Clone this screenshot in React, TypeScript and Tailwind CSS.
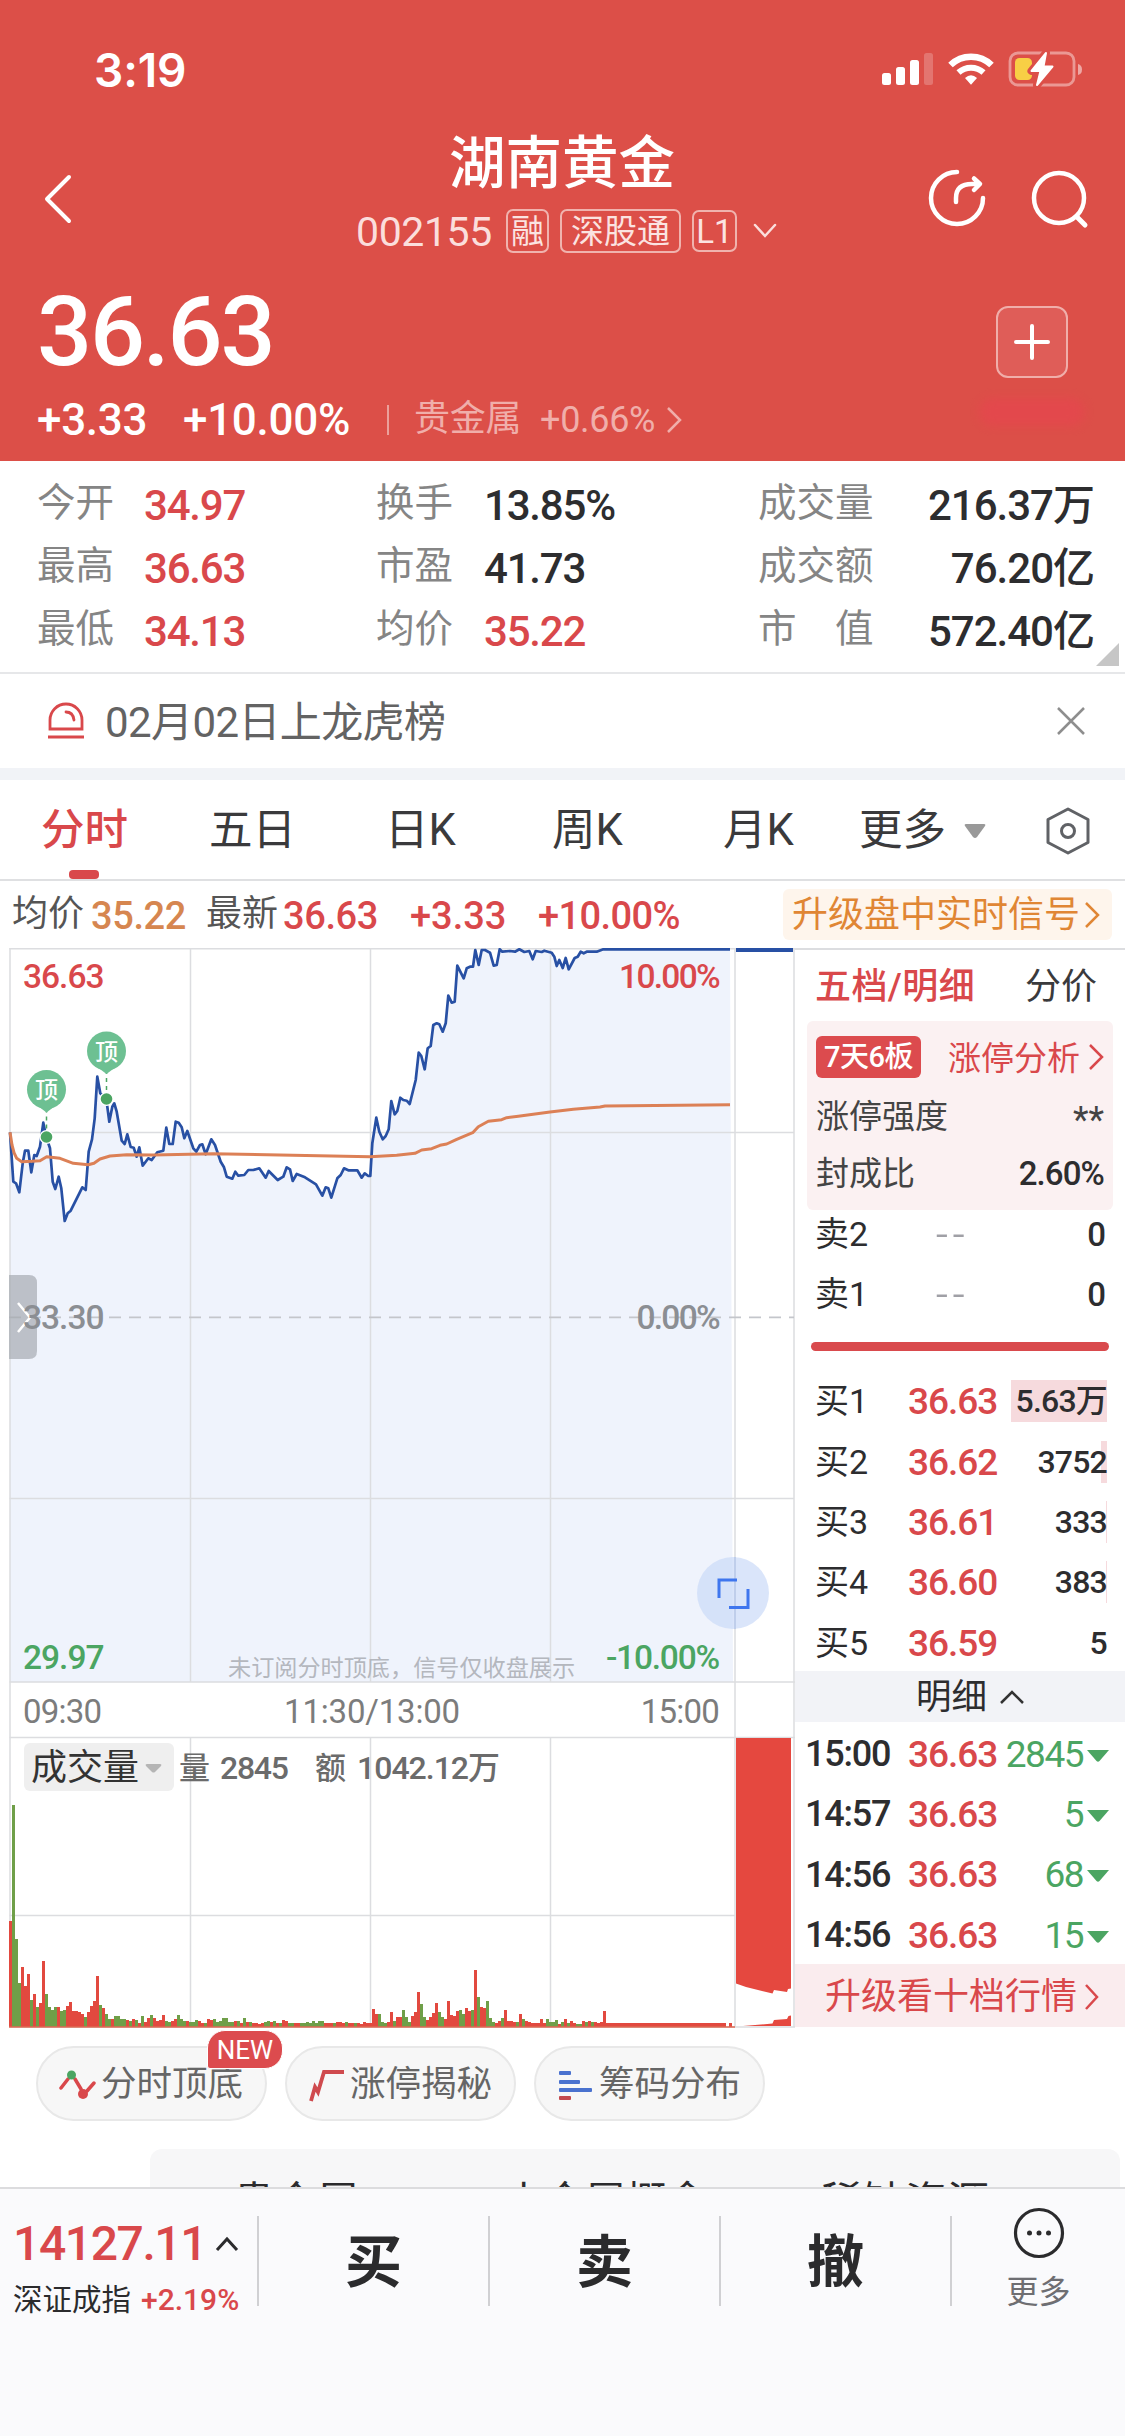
import React from "react";

type P = [number, number];

/* Price samples; every unit is a third of a pixel, one list for each session. */
const MORNING: P[] = [[30,277],[40,425],[48,430],[58,457],[68,370],[75,332],[85,332],[94,397],[103,345],[110,348],[120,320],[130,248],[139,292],[150,325],[158,425],[166,447],[176,410],[184,445],[194,543],[203,520],[212,512],[247,442],[257,450],[266,335],[276,298],[284,235],[292,110],[301,160],[319,177],[328,245],[337,200],[343,190],[350,215],[365,302],[374,312],[382,283],[392,321],[401,323],[410,350],[418,322],[428,377],[445,355],[455,360],[472,337],[490,332],[499,263],[508,312],[518,312],[527,245],[536,248],[545,262],[553,295],[562,273],[580,325],[589,335],[600,315],[607,313],[617,343],[634,298],[645,315],[662,365],[672,382],[680,410],[697,416],[706,395],[715,407],[733,405],[745,390],[760,390],[778,385],[797,413],[806,393],[833,420],[850,410],[860,382],[870,388],[878,423],[890,402],[915,412],[948,433],[967,467],[977,442],[985,445],[994,473],[1012,415],[1022,405],[1032,385],[1045,391],[1072,391],[1085,413],[1094,400],[1105,408]];
const AFTERNOON: P[] = [[91,738],[97,640],[109,563],[118,605],[128,628],[137,618],[146,598],[154,513],[164,553],[172,543],[181,503],[190,510],[200,512],[209,522],[227,450],[236,368],[244,378],[254,418],[263,355],[272,348],[280,285],[290,280],[298,283],[308,305],[317,280],[325,197],[335,218],[344,215],[352,107],[371,145],[380,115],[390,110],[399,110],[406,60],[416,105],[425,60],[435,60],[450,68],[461,107],[470,105],[479,58],[487,65],[510,63],[525,65],[538,58],[553,66],[568,63],[578,88],[587,63],[605,66],[613,62],[635,68],[643,80],[650,108],[658,90],[668,114],[677,84],[686,118],[704,84],[713,80],[722,65],[731,70],[740,65],[770,65],[790,58],[1170,58]];
const AVG_AM: P[] = [[30,277],[36,315],[42,338],[50,355],[65,365],[95,364],[120,362],[140,350],[180,355],[220,370],[265,374],[282,370],[300,357],[330,348],[380,344],[460,345],[640,341],[1111,350]];
const AVG_PM: P[] = [[91,680],[170,676],[225,670],[245,660],[275,656],[300,646],[320,642],[350,628],[398,608],[415,590],[445,574],[485,569],[500,563],[535,559],[630,546],[700,538],[780,531],[795,528],[1170,524]];

const join = (am: P[], pm: P[]) =>
  [...am.map(([x, y]) => [x / 3, 1040 + y / 3]), ...pm.map(([x, y]) => [340 + x / 3, 930 + y / 3])]
    .map(([x, y]) => `${x.toFixed(1)},${y.toFixed(1)}`)
    .join(" ");

const priceLine = join(MORNING, AFTERNOON);
const avgLine = join(AVG_AM, AVG_PM);

/* Volume per minute: R for a rising minute, G for a falling one. */
const VOLUME =
  "R106 G222 G88 G44 R60 R41 R53 G27 R33 G20 R24 R66 G33 G20 G17 G20 R20 G16 G17 R21 R25 R16 R16 R15 R13 G10 R15 R21 R26 R51 G22 R19 G13 G8 R8 G11 G11 G8 G8 R7 G6 R8 G7 R4 G11 R5 R9 G12 R9 R6 R7 R12 G6 G5 R6 R8 G12 G8 G6 R6 G5 G5 G7 R6 R4 G4 R8 R7 G8 G5 G6 G9 G9 G5 G5 R6 G6 R4 G9 R5 G5 R4 R4 R3 R4 G5 G6 R5 G6 R4 G4 R7 R6 G4 G4 R4 R4 G4 G4 G5 G4 G6 G4 G6 G6 R4 R4 R4 G4 R5 R5 R4 G5 R4 R4 G4 R4 R3 R5 R4 R4 " +
  "R18 R13 G13 G5 G4 R5 R15 G6 R10 R10 G17 G10 G5 R11 R15 R35 G23 G10 R7 R10 R14 R24 G15 G10 R8 R26 R12 R11 R16 G17 G13 R19 R16 G17 R57 G30 R20 R19 G26 G9 G5 R4 R6 G9 R17 R6 R6 R5 G5 R13 G8 R6 R5 R4 R4 R4 R8 R4 G8 G5 G5 G7 R3 G5 R8 G4 R6 R4 G3 G3 R6 G5 R6 G5 R5 R4 R5 R16";
const bars = VOLUME.split(" ").map((v) => ({ up: v[0] === "R", h: Number(v.slice(1)) }));

const RED = "#d9484b";
const GREEN = "#4ba562";
const FONT = "Roboto, 'Noto Sans CJK SC', sans-serif";

function StatusIcons() {
  return (
    <svg width="206" height="38" viewBox="880 50 206 38" fill="none">
      <g fill="#fff">
        <rect x="882" y="73" width="9" height="12" rx="2.5" />
        <rect x="896" y="67" width="9" height="18" rx="2.5" />
        <rect x="910" y="60" width="9" height="25" rx="2.5" />
        <rect x="924" y="53" width="9" height="32" rx="2.5" opacity=".22" />
      </g>
      <path d="M950.5 65a29.500 29.500 0 0 1 41 0" stroke="#fff" strokeWidth="6.500" />
      <path d="M958.500 72.500a18.500 18.500 0 0 1 25 0" stroke="#fff" strokeWidth="6" />
      <path d="M965 78q6-5.500 12 0l-6 6.800z" fill="#fff" />
      <rect x="1010" y="53" width="64" height="32" rx="8" stroke="#fff" strokeOpacity=".42" strokeWidth="2.800" />
      <path d="M1078 64q4 1 4 5.500t-4 5.500z" fill="#fff" opacity=".5" />
      <rect x="1015" y="58" width="17" height="22" rx="4.500" fill="#f8cf45" />
      <path d="M1046 53l-14.500 18h9l-3.500 14 15.500-18.500h-9z" fill="#dc4f48" stroke="#dc4f48" strokeWidth="8" strokeLinejoin="round" />
      <path d="M1046 53l-14.500 18h9l-3.500 14 15.500-18.500h-9z" fill="#fff" stroke="#fff" strokeWidth="2" strokeLinejoin="round" />
    </svg>
  );
}

function Tag({ children, className }: { children: React.ReactNode; className: string }) {
  return (
    <span className={`flex items-center justify-center rounded-[7px] border-2 border-[#f0b3ae] text-[33px] leading-none text-[#fbe3e1] ${className}`}>
      {children}
    </span>
  );
}

function Header() {
  return (
    <header className="h-[461px] shrink-0 bg-[#dc4f48] text-white">
      <div className="flex h-[132px] items-start justify-between pt-[50px] pr-[39px] pl-[94px]">
        <span className="mt-[-4px] font-[Inter] text-[46px] leading-[48px] font-semibold tracking-[-0.1px]">3:19</span>
        <StatusIcons />
      </div>
      <div className="flex h-[134px] px-[42px]">
        <svg className="mt-[41px]" width="32" height="52" viewBox="0 0 32 52" fill="none" stroke="#fff" strokeWidth="4" strokeLinecap="round" strokeLinejoin="round">
          <path d="M27 4L5 26l22 22" />
        </svg>
        <div className="ml-[282px] flex w-[424px] flex-col">
          <h1 className="pt-[2px] pl-[93px] text-[56.500px] leading-[60px] font-medium">湖南黄金</h1>
          <div className="mt-[14px] flex h-[46px] items-center">
            <span className="w-[150px] pt-[2px] text-[41px] leading-none tracking-[-0.4px] text-[#fbdedc]">002155</span>
            <Tag className="h-[44px] w-[43px]">融</Tag>
            <Tag className="ml-[11px] h-[44px] w-[121px]">深股通</Tag>
            <Tag className="ml-[11px] h-[42px] w-[45px]">L1</Tag>
            <svg className="ml-[16px]" width="24" height="16" viewBox="0 0 24 16" fill="none" stroke="#fbdedc" strokeWidth="2.500" strokeLinecap="round">
              <path d="M2 2l10 11L22 2" />
            </svg>
          </div>
        </div>
        <svg className="mt-[34px] mr-[-6px] ml-auto shrink-0" width="166" height="64" viewBox="923 166 166 64" fill="none" stroke="#fff" strokeWidth="4.500" strokeLinecap="round" strokeLinejoin="round">
          <path d="M957 172a26 26 0 1 0 26 26" />
          <path d="M956 202v-4q0-14 16-14h6M974 178.500l6 5.500-6 6" />
          <circle cx="1059" cy="198" r="25" />
          <path d="M1077 217l8 8" strokeWidth="5" />
        </svg>
      </div>
      <div className="flex h-[195px] justify-between pr-[40px] pl-[37px]">
        <div>
          <div className="mt-[17px] text-[97px] leading-[98px] font-medium tracking-[-2.200px]">36.63</div>
          <div className="mt-[17px] flex h-[44px] items-center text-[44px] leading-none font-medium tracking-[-0.3px]">
            <span className="w-[146px]">+3.33</span>
            <span className="w-[204px]">+10.00%</span>
            <span className="mr-[25px] h-[30px] w-[2px] bg-[#eba09b]" />
            <span className="w-[126px] pb-[2px] text-[36px] font-normal text-[#f0aeaa]">贵金属</span>
            <span className="text-[36px] font-normal text-[#f0aeaa]">+0.66%</span>
            <svg className="ml-[10px]" width="18" height="28" viewBox="0 0 18 28" fill="none" stroke="#f0aeaa" strokeWidth="2.500">
              <path d="M3 2l12 12L3 26" />
            </svg>
          </div>
        </div>
        <div className="flex flex-col items-center pt-[40px]">
          <button className="flex size-[72px] items-center justify-center rounded-[12px] border-2 border-[#f0aeaa] bg-[#df5d58]">
            <svg width="36" height="36" viewBox="0 0 36 36" stroke="#fff" strokeWidth="4" strokeLinecap="round">
              <path d="M18 2v32M2 18h32" />
            </svg>
          </button>
          <div className="mt-[20px] h-[28px] w-[106px] rounded-full bg-[#e8444f] opacity-60 blur-[5px]" />
        </div>
      </div>
    </header>
  );
}

const STATS = [
  ["今开", "34.97", "换手", "13.85%", "成交量", "216.37万"],
  ["最高", "36.63", "市盈", "41.73", "成交额", "76.20亿"],
  ["最低", "34.13", "均价", "35.22", "市　值", "572.40亿"],
];

function Stats() {
  return (
    <section className="relative h-[213px] shrink-0 border-b-2 border-[#e6e7e9] pt-[12px] text-[42px] font-medium tracking-[-1.200px] text-[#2d2d2f]">
      {STATS.map((r) => (
        <div key={r[0]} className="flex h-[63px] items-center pr-[31px] pl-[37px] leading-none">
          <span className="w-[107px] pb-[3px] text-[38.500px] font-normal tracking-normal text-[#858585]">{r[0]}</span>
          <span className="w-[232px] pt-[2px] text-[#d9484b]">{r[1]}</span>
          <span className="w-[108px] pb-[3px] text-[38.500px] font-normal tracking-normal text-[#858585]">{r[2]}</span>
          <span className={`w-[274px] pt-[2px] ${r[2] === "均价" ? "text-[#d9484b]" : ""}`}>{r[3]}</span>
          <span className="pb-[3px] text-[38.500px] font-normal tracking-normal text-[#858585]">{r[4]}</span>
          <span className="ml-auto pt-[2px] tracking-[-1px]">{r[5]}</span>
        </div>
      ))}
      <svg className="absolute right-[6px] bottom-[6px]" width="23" height="23" viewBox="0 0 23 23">
        <path d="M23 0v23H0z" fill="#c6c6c6" />
      </svg>
    </section>
  );
}

function Notice() {
  return (
    <section className="flex h-[106px] shrink-0 items-start border-b-[12px] border-[#f1f3f7] px-[47px] text-[42px] leading-none text-[#636363]">
      <svg className="mt-[27px]" width="38" height="38" viewBox="0 0 38 38" fill="none" stroke={RED} strokeWidth="2.800">
        <path d="M3 28V19a16 16 0 0 1 32 0v9zM1 36h36" />
        <path d="M19 11q7 0 8 8" strokeLinecap="round" />
      </svg>
      <span className="mt-[28px] ml-[20px] tracking-[-0.6px]">02月02日上龙虎榜</span>
      <svg className="mt-[33px] mr-[-7px] ml-auto" width="28" height="28" viewBox="0 0 28 28" stroke="#8e8e8e" strokeWidth="2.500">
        <path d="M1 1l26 26M27 1L1 27" />
      </svg>
    </section>
  );
}

function Tabs() {
  return (
    <nav className="flex h-[101px] shrink-0 items-center border-b-2 border-[#dfe0e2] pt-[3px] pl-[41px] text-[43.500px] leading-none text-[#3a3a3c]">
      <span className="relative w-[168px] font-medium text-[#d9484b]">
        分时
        <i className="absolute top-[61px] left-[28px] h-[9px] w-[30px] rounded-[4px] bg-[#d9484b]" />
      </span>
      <span className="w-[176px]">五日</span>
      <span className="w-[167px]">日K</span>
      <span className="w-[171px]">周K</span>
      <span className="w-[136px]">月K</span>
      <span className="w-[105px]">更多</span>
      <svg width="22" height="16" viewBox="0 0 22 16">
        <path d="M2 1h18q2 0 1 2l-8 11q-2 2-4 0L1 3Q0 1 2 1" fill="#999" />
      </svg>
      <svg className="ml-[60px]" width="44" height="48" viewBox="0 0 44 48" fill="none" stroke="#606266" strokeWidth="3" strokeLinejoin="round">
        <path d="M22 2l20 10.500v23L22 46 2 35.500v-23z" />
        <circle cx="22" cy="24" r="6.500" />
      </svg>
    </nav>
  );
}

function QuoteStrip() {
  return (
    <div className="flex h-[67px] shrink-0 items-center pr-[13px] pl-[12px] text-[38px] leading-none font-medium text-[#d9484b]">
      <span className="w-[79px] pb-[1px] text-[36px] font-normal text-[#555]">均价</span>
      <span className="w-[115px] pt-[2px] tracking-[-0.4px] text-[#d68650]">35.22</span>
      <span className="w-[77px] pb-[1px] text-[36px] font-normal text-[#555]">最新</span>
      <span className="w-[127px] pt-[2px] tracking-[-0.4px]">36.63</span>
      <span className="w-[128px] pt-[2px]">+3.33</span>
      <span className="pt-[2px] tracking-[-0.6px]">+10.00%</span>
      <span className="ml-auto flex h-[51px] w-[329px] items-center rounded-[6px] bg-[#fef5ec] pl-[9px] text-[36px] font-normal text-[#e08634]">
        升级盘中实时信号
        <svg className="ml-[3px]" width="18" height="28" viewBox="0 0 18 28" fill="none" stroke="#e08634" strokeWidth="2.500">
          <path d="M3 2l12 12L3 26" />
        </svg>
      </span>
    </div>
  );
}

function Pin({ x, y, dot }: { x: number; y: number; dot: number }) {
  return (
    <g>
      <path d={`M${x} ${y + 19}V${dot}`} stroke={GREEN} strokeWidth="1.500" strokeDasharray="4 4" />
      <path d={`M${x - 8} ${y + 17}L${x} ${y + 23}L${x + 8} ${y + 17}z`} fill="#6dc092" />
      <circle cx={x} cy={y} r="19.500" fill="#6dc092" />
      <text x={x} y={y + 8.5} fontSize="23" fontWeight="500" fill="#fff" textAnchor="middle">顶</text>
      <circle cx={x} cy={dot} r="7" fill="#fff" />
      <circle cx={x} cy={dot} r="5.800" fill={GREEN} />
    </g>
  );
}

function Chart() {
  return (
    <svg className="block shrink-0" width="795" height="1081" viewBox="0 948 795 1081" fontFamily={FONT}>
      <polygon points={`10,1682 ${priceLine} 733,1682`} fill="#eff3fc" />
      <g stroke="#dcdde0" strokeWidth="1.500" fill="none">
        <path d="M9.500 948.800H795M9.500 1682H795M9.500 1737.500H795M9.500 2027H795" />
        <path d="M10 948V2027M190.500 948V1682M370.500 948V1682M550.500 948V1682M735 948V2027M794 948V2027" />
        <path d="M190.500 1738V2027M370.500 1738V2027M550.500 1738V2027" />
        <path d="M9.500 1132.500H794M9.500 1498.500H794M9.500 1915.500H735" />
      </g>
      <path d="M9 1317.300H794" stroke="#c4c6cb" strokeWidth="1.800" strokeDasharray="12 8" />
      <polyline points={priceLine} fill="none" stroke="#2850a4" strokeWidth="2.700" strokeLinejoin="round" />
      <polyline points={avgLine} fill="none" stroke="#dc8056" strokeWidth="3" strokeLinejoin="round" />
      <path d="M736 950H793" stroke="#2850a4" strokeWidth="4" />
      <Pin x={46.5} y={1089.5} dot={1137} />
      <Pin x={106.5} y={1051} dot={1099} />

      <path d="M9 1275H29q8 0 8 8V1351q0 8-8 8H9z" fill="#a4a8b0" opacity=".68" />
      <path d="M18 1303l12 14.500-12 14.500" fill="none" stroke="#fff" strokeWidth="2.500" />

      <g fontSize="33.500" fontWeight="500" letterSpacing="-1">
        <text x="23" y="988" fill={RED}>36.63</text>
        <text x="719" y="988" fill={RED} textAnchor="end" letterSpacing="-1.700">10.00%</text>
        <text x="23" y="1329" fill="#8b8e93">33.30</text>
        <text x="719" y="1329" fill="#8b8e93" textAnchor="end" letterSpacing="-1.700">0.00%</text>
        <text x="23" y="1668.500" fill={GREEN}>29.97</text>
        <text x="719" y="1668.500" fill={GREEN} textAnchor="end" letterSpacing="-1.200">-10.00%</text>
      </g>
      <text x="228" y="1675.500" fontSize="23.150" fill="#b4b7be">未订阅分时顶底，信号仅收盘展示</text>
      <g fontSize="33" fill="#7c7c7c" letterSpacing="-.8">
        <text x="23" y="1723">09:30</text>
        <text x="372" y="1723" textAnchor="middle" letterSpacing="-.2">11:30/13:00</text>
        <text x="719" y="1723" textAnchor="end">15:00</text>
      </g>

      <circle cx="733" cy="1593" r="36" fill="#cbdaf8" opacity=".7" />
      <path d="M735 1557v72" stroke="#b9c8e8" strokeWidth="1.500" />
      <path d="M719 1598v-18h18M748 1589v18.500h-19" fill="none" stroke="#3f76ee" strokeWidth="3" />

      <rect x="24" y="1743" width="150" height="48" rx="6" fill="#efefef" />
      <text x="31" y="1780" fontSize="36" fill="#333">成交量</text>
      <path d="M147 1764h13q2 0 1 2l-6 6q-1.500 1-3 0l-6-6q-1-2 1-2" fill="#b5b5b5" />
      <g fontSize="32" fontWeight="500" fill="#6b6b6b">
        <text x="179" y="1779" fontSize="31">量</text>
        <text x="220" y="1779" letterSpacing="-1.300">2845</text>
        <text x="315" y="1779" fontSize="31">额</text>
        <text x="357" y="1779" letterSpacing="-1">1042.12万</text>
      </g>

      <g shapeRendering="crispEdges">
        {bars.map((b, i) => (
          <rect key={i} x={9 + i * 3} y={2027 - b.h} width="3" height={b.h} fill={b.up ? "#e2493f" : "#6f9f48"} />
        ))}
        <rect x="606" y="2023" width="120" height="4" fill="#e2493f" />
        <rect x="729" y="2023" width="3" height="4" fill="#e2493f" />
      </g>
      <path d="M9 2027H735" stroke="#dd6a55" strokeWidth="1.500" />
      <path d="M736 1738H791V1988.500L788 1989L787 1992L774 1990L772.500 1993.500L746 1987L736 1983.500z" fill="#e5483f" />
      <path d="M743 2026L772.500 2023.500L774 2020L787 2019L788.500 2016L791 2015.500V2026z" fill="#e5483f" />
    </svg>
  );
}

const ASKS = [["卖2", "0"], ["卖1", "0"]];
const BIDS: [string, string, string, string][] = [
  ["买1", "36.63", "5.63万", "w-[96px] h-[42px]"],
  ["买2", "36.62", "3752", "w-[6px] h-[42px]"],
  ["买3", "36.61", "333", "w-px h-[42px]"],
  ["买4", "36.60", "383", "w-px h-[42px]"],
  ["买5", "36.59", "5", "w-0 h-0"],
];
const DEALS = [["15:00", "36.63", "2845"], ["14:57", "36.63", "5"], ["14:56", "36.63", "68"], ["14:56", "36.63", "15"]];

function OrderBook() {
  return (
    <aside className="flex h-[1079px] w-[330px] flex-col border-t-2 border-[#dcdde0] text-[#2d2d2f]">
      <div className="flex h-[73px] items-center justify-between pt-[2px] pr-[28px] pl-[20px] text-[36px] leading-none">
        <span className="font-medium tracking-[0.4px] text-[#d9484b]">五档/明细</span>
        <span className="text-[#3a3a3c]">分价</span>
      </div>
      <div className="mr-[12px] ml-[12px] h-[189px] shrink-0 rounded-[6px] bg-[#fbf1f2] px-[9px] text-[33px] leading-none text-[#444]">
        <div className="flex h-[66px] items-end">
          <span className="mb-[9px] flex h-[42px] w-[105px] items-center justify-center rounded-[6px] bg-[#dc4b4e] text-[29px] font-medium tracking-[-0.5px] text-white">7天6板</span>
          <span className="mb-[12px] ml-auto text-[#d9484b]">涨停分析</span>
          <svg className="mb-[16px] ml-[8px]" width="16" height="28" viewBox="0 0 16 28" fill="none" stroke={RED} strokeWidth="2.500">
            <path d="M2 2l12 12L2 26" />
          </svg>
        </div>
        <div className="flex h-[58px] items-center justify-between">
          <span>涨停强度</span>
          <span className="pt-2 text-[36px]">**</span>
        </div>
        <div className="flex h-[56px] items-center justify-between">
          <span>封成比</span>
          <span className="text-[33px] font-medium tracking-[-0.9px] text-[#2d2d2f]">2.60%</span>
        </div>
      </div>
      <div className="flex h-[117px] shrink-0 flex-col">
        {ASKS.map((r) => (
          <div key={r[0]} className="flex h-[60px] shrink-0 items-center pr-[19px] pb-[12px] pl-[20px] text-[34px] leading-none">
            <span className="w-[121px]">{r[0]}</span>
            <span className="origin-left scale-x-125 tracking-[4px] text-[#a0a0a6]">--</span>
            <span className="ml-auto text-[33px] font-medium">{r[1]}</span>
          </div>
        ))}
      </div>
      <div className="mt-[15px] mr-[16px] ml-[16px] h-[9px] shrink-0 rounded-full bg-[#d94a4d]" />
      <div className="mt-[20px] h-[300px] shrink-0">
        {BIDS.map((r) => (
          <div key={r[0]} className="flex h-[60.400px] items-center pr-[18px] pl-[20px] text-[34px] leading-none">
            <span className="w-[93px]">{r[0]}</span>
            <span className="pt-[1px] text-[37px] font-medium tracking-[-1px] text-[#d9484b]">{r[1]}</span>
            <span className="relative ml-auto flex h-[42px] items-center">
              <i className={`absolute right-0 bg-[#f6dadd] ${r[3]}`} />
              <span className="relative text-[32px] font-medium tracking-[-0.8px]">{r[2]}</span>
            </span>
          </div>
        ))}
      </div>
      <div className="flex h-[51px] shrink-0 items-center justify-center bg-[#f2f3f7] pl-[20px] text-[35.500px] leading-none">
        <span className="pt-[2px]">明细</span>
        <svg className="ml-[13px]" width="24" height="14" viewBox="0 0 24 14" fill="none" stroke="#333" strokeWidth="2.500">
          <path d="M1 13L12 2l11 11" />
        </svg>
      </div>
      <div className="h-[242px] shrink-0 pt-[2px]">
        {DEALS.map((r, i) => (
          <div key={i} className="flex h-[60.300px] items-center pr-[16px] pl-[10px] text-[37px] leading-none font-medium">
            <span className="w-[103px] text-[36px] tracking-[-1.200px]">{r[0]}</span>
            <span className="tracking-[-1px] text-[#d9484b]">{r[1]}</span>
            <span className="ml-auto font-normal tracking-[-1.500px] text-[#4ba562]">{r[2]}</span>
            <svg className="mt-[3px] ml-[4px]" width="22" height="12" viewBox="0 0 22 12">
              <path d="M0 0h22L12.500 11q-1.500 1.500-3 0z" fill={GREEN} />
            </svg>
          </div>
        ))}
      </div>
      <div className="flex h-[63px] shrink-0 items-center bg-[#faecee] pt-[2px] pl-[30px] text-[36px] leading-none text-[#d9484b]">
        升级看十档行情
        <svg className="ml-[7px]" width="16" height="28" viewBox="0 0 16 28" fill="none" stroke={RED} strokeWidth="2.500">
          <path d="M2 2l11 12L2 26" />
        </svg>
      </div>
    </aside>
  );
}

function Tools() {
  const pill = "relative flex h-[75px] w-[231px] items-center rounded-full border-2 border-[#e8e8e8] bg-[#f7f7f7] pt-[2px] pl-[21px] text-[35.500px] leading-none text-[#666]";
  return (
    <div className="flex h-[121px] shrink-0 gap-[18px] pt-[18px] pl-[36px]">
      <div className={pill}>
        <svg className="mr-[5px]" width="37" height="36" viewBox="0 0 37 36" fill="none" stroke="#d9484b" strokeWidth="3.500" strokeLinecap="round">
          <path d="M2 21l7-9M16 12l6 10M28 24l7-8" />
          <circle cx="12.500" cy="8" r="4.500" fill={GREEN} stroke="none" />
          <circle cx="24" cy="27" r="5" fill={RED} stroke="none" />
        </svg>
        分时顶底
        <span className="absolute top-[-18px] left-[169px] flex h-[39px] w-[76px] items-center justify-center rounded-[18px] rounded-bl-[3px] border-[1.500px] border-white bg-[#dc4b4e] text-[26px] text-white">NEW</span>
      </div>
      <div className={pill}>
        <svg className="mr-[5px]" width="37" height="36" viewBox="0 0 37 36" fill="none" stroke="#cf4a4e" strokeWidth="3.800">
          <path d="M3 34L7 20l3 5 6-20H36" />
        </svg>
        涨停揭秘
      </div>
      <div className={pill}>
        <svg className="mr-[5px]" width="37" height="36" viewBox="0 0 37 36">
          <g fill="#4a72cf">
            <rect x="2" y="4" width="12" height="4" rx="1" />
            <rect x="2" y="13" width="21" height="4" rx="1" />
            <rect x="2" y="21" width="33" height="4" rx="1" />
          </g>
          <rect x="2" y="29" width="12" height="4" rx="1" fill="#c44a4e" />
        </svg>
        筹码分布
      </div>
    </div>
  );
}

function BottomBar() {
  return (
    <footer className="flex h-[249px] shrink-0 border-t-2 border-[#dcdcde] bg-[#fafafc] pt-[27px] text-[#2b2b2d]">
      <div className="w-[257px] pl-[13px]">
        <div className="mt-[4px] flex items-center text-[48px] leading-[48px] font-medium tracking-[-1.400px] text-[#d9484b]">
          14127.11
          <svg className="ml-[9px]" width="24" height="16" viewBox="0 0 24 16" fill="none" stroke="#2b2b2d" strokeWidth="3">
            <path d="M2 14L12 3l10 11" />
          </svg>
        </div>
        <div className="mt-[15px] flex items-center text-[29.500px] leading-[34px]">
          <span className="w-[128px]">深证成指</span>
          <span className="text-[30px] font-medium text-[#d9484b]">+2.19%</span>
        </div>
      </div>
      <div className="flex h-[90px] w-[695px] divide-x-2 divide-[#d0d0d3] border-x-2 border-[#d0d0d3] text-[57px] leading-[93px] font-bold">
        {["买", "卖", "撤"].map((t) => (
          <span key={t} className="flex-1 text-center">{t}</span>
        ))}
      </div>
      <div className="flex flex-1 flex-col items-center text-[32px] leading-none text-[#6e6e72]">
        <svg className="mt-[-10px]" width="54" height="54" viewBox="0 0 54 54" fill="none" stroke="#2b2b2d" strokeWidth="3.200">
          <circle cx="27" cy="27" r="23.500" />
          <g fill="#2b2b2d" stroke="none">
            <circle cx="17.500" cy="27" r="2.500" />
            <circle cx="27" cy="27" r="2.500" />
            <circle cx="36.500" cy="27" r="2.500" />
          </g>
        </svg>
        <span className="mt-[16px]">更多</span>
      </div>
    </footer>
  );
}

export default function App() {
  return (
    <main className="flex h-[2436px] w-[1125px] flex-col overflow-hidden bg-white font-[Roboto,'Noto_Sans_CJK_SC',sans-serif]">
      <Header />
      <Stats />
      <Notice />
      <Tabs />
      <QuoteStrip />
      <div className="flex h-[1080px] shrink-0">
        <Chart />
        <OrderBook />
      </div>
      <Tools />
      <div className="mr-[5px] ml-[150px] flex h-[38px] shrink-0 overflow-hidden rounded-t-[12px] bg-[#f7f7f8] pt-[33px] pl-[83px] text-[42px] leading-none text-[#2b2b2d]">
        <span className="w-[270px]">贵金属</span>
        <span className="w-[318px] text-[41px]">小金属概念</span>
        <span>稀缺资源</span>
      </div>
      <BottomBar />
    </main>
  );
}
